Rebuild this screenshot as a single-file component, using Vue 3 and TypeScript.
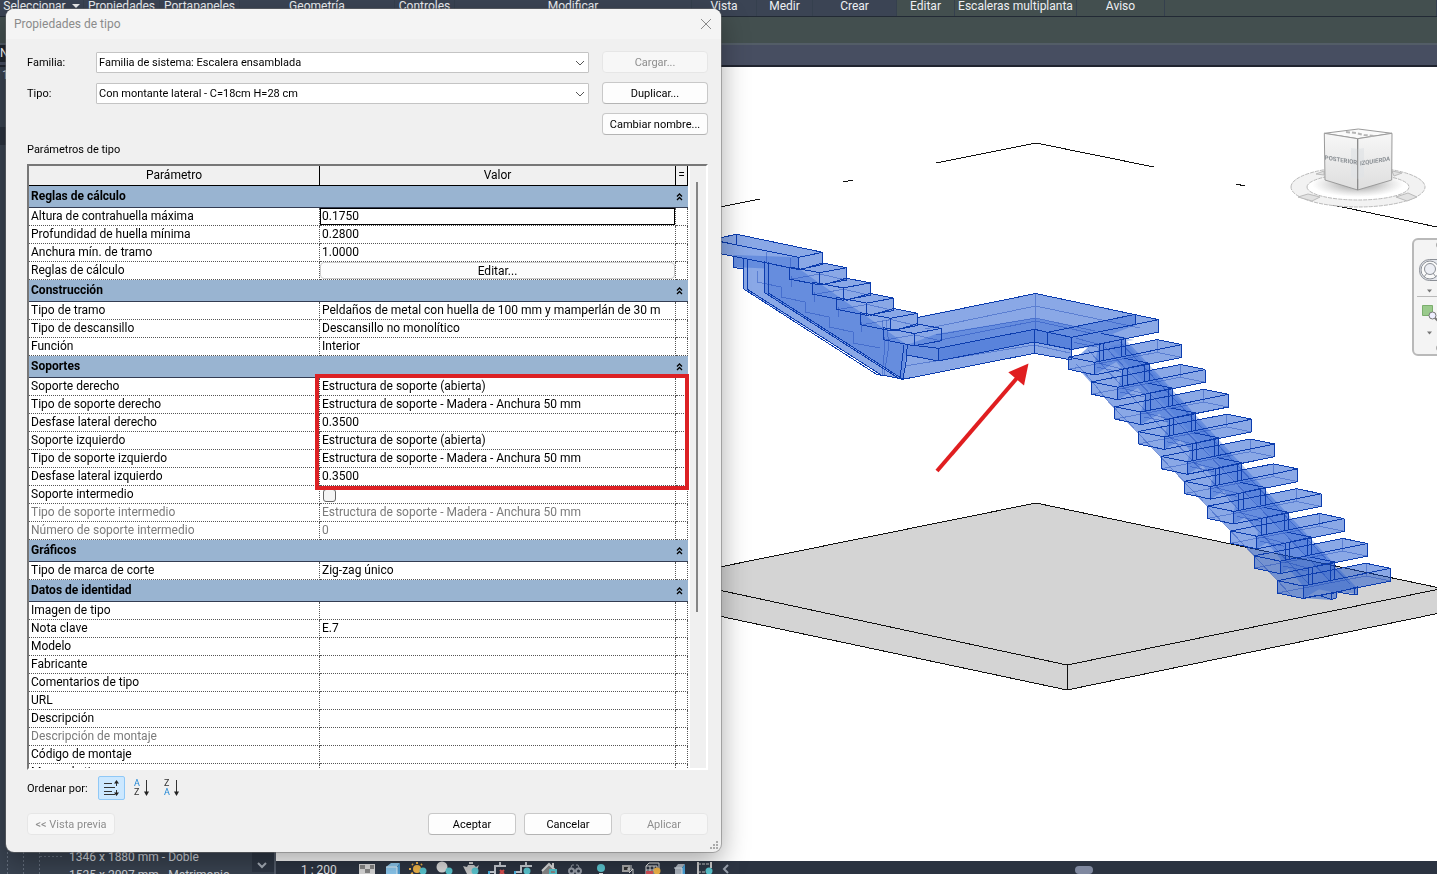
<script setup lang="ts">
import { ref } from 'vue'

interface Param { name: string; value?: string; kind?: 'input' | 'button' | 'check'; muted?: boolean }
interface Group { title: string; rows: Param[] }

const ribbon = ['Seleccionar', 'Propiedades', 'Portapapeles', 'Geometría', 'Controles', 'Modificar', 'Vista', 'Medir', 'Crear', 'Editar', 'Escaleras multiplanta', 'Aviso']

const support = 'Estructura de soporte - Madera - Anchura 50 mm'
const groups: Group[] = [
  { title: 'Reglas de cálculo', rows: [
    { name: 'Altura de contrahuella máxima', value: '0.1750', kind: 'input' },
    { name: 'Profundidad de huella mínima', value: '0.2800' },
    { name: 'Anchura mín. de tramo', value: '1.0000' },
    { name: 'Reglas de cálculo', value: 'Editar...', kind: 'button' },
  ] },
  { title: 'Construcción', rows: [
    { name: 'Tipo de tramo', value: 'Peldaños de metal con huella de 100 mm y mamperlán de 30 m' },
    { name: 'Tipo de descansillo', value: 'Descansillo no monolítico' },
    { name: 'Función', value: 'Interior' },
  ] },
  { title: 'Soportes', rows: [
    { name: 'Soporte derecho', value: 'Estructura de soporte (abierta)' },
    { name: 'Tipo de soporte derecho', value: support },
    { name: 'Desfase lateral derecho', value: '0.3500' },
    { name: 'Soporte izquierdo', value: 'Estructura de soporte (abierta)' },
    { name: 'Tipo de soporte izquierdo', value: support },
    { name: 'Desfase lateral izquierdo', value: '0.3500' },
    { name: 'Soporte intermedio', kind: 'check' },
    { name: 'Tipo de soporte intermedio', value: support, muted: true },
    { name: 'Número de soporte intermedio', value: '0', muted: true },
  ] },
  { title: 'Gráficos', rows: [{ name: 'Tipo de marca de corte', value: 'Zig-zag único' }] },
  { title: 'Datos de identidad', rows: [
    { name: 'Imagen de tipo' },
    { name: 'Nota clave', value: 'E.7' },
    { name: 'Modelo' },
    { name: 'Fabricante' },
    { name: 'Comentarios de tipo' },
    { name: 'URL' },
    { name: 'Descripción' },
    { name: 'Descripción de montaje', muted: true },
    { name: 'Código de montaje' },
    { name: 'Marca de tipo' },
  ] },
]

const riser = ref('0.1750')
const middle = ref(false)

// Lower flight: ten identical treads; upper flight: five.
const lower = Array.from({ length: 10 }, (_, i) => `translate(${(i - 9) * 23.2} ${(i - 9) * 24.85})`)
const upper = Array.from({ length: 5 }, (_, i) => `translate(${i * 23.6} ${i * 15.2})`)
</script>

<template>
  <div class="app">
    <header class="ribbon">
      <span v-for="(r, i) in ribbon" :key="r" class="tab" :class="{ green: i > 8 }">{{ r }}<i v-if="i === 0" class="caret"></i></span>
      <span class="green"></span>
    </header>
    <div class="band"></div>
    <div class="subband"></div>

    <div class="work">
      <aside class="browser">
        <div class="brow-head">N</div>
        <div class="brow-one">1</div>
        <div class="brow-dark"></div>
        <div class="tree">
          <svg class="guides" viewBox="0 0 69 30" width="69" height="30"><path d="M7.500 0V30M23.500 0V30M39.500 0V30M40 8.500H64" stroke="#66707f" stroke-dasharray="2 2" fill="none" /></svg>
          <div class="tree-text"><div>1346 x 1880 mm - Doble</div><div>1525 x 2007 mm - Matrimonio</div></div>
          <svg class="tree-arrow" viewBox="0 0 22 24" width="22" height="24"><path d="M6 15l4 4 4-4" stroke="#aab1bc" stroke-width="2" fill="none" /></svg>
        </div>
      </aside>

      <main class="view">
        <svg class="scene" viewBox="276 67 1161 794" preserveAspectRatio="xMinYMin slice" role="img" aria-label="Vista 3D de la escalera">
          <g stroke="#111" stroke-width="1" fill="none" shape-rendering="crispEdges">
            <path d="M936 163L1036 143L1154 167M843 182L853 180M1236 184L1245 186M700 211L760 199M1328 204L1437 227" />
            <path fill="#d4d4d4" d="M700 571L1036 503L1440 588V613L1067 690L700 612Z" />
            <path d="M700 586L1067 665L1440 589M1067 665V690" />
          </g>

          <!-- translucent body, first layer -->
          <g class="solid">
            <path d="M903 320L1035.700 293.500L1158.700 319.700V332L1072 349.500V360L1034.300 353L903 379L905 340Z" />
            <path d="M700 242L736.700 234.300L822.700 252.300V265L798.700 270L700 249Z" />
            <path d="M733.300 252L798 262L907 345L903 379L882 375L743.300 288.700V269L733.300 267Z" />
            <path v-for="t in upper" :key="t" :transform="t" d="M789.300 267L822.700 263.300L846.700 267.700V280L819.700 285L789.300 279Z" />
            <path d="M1072 362L1104 397L1277 580L1303 598L1331 600L1322 580L1125 355L1098 338Z" />
            <g v-for="t in lower" :key="t" :transform="t">
              <path d="M1277.300 580.700L1366 563.300L1390.700 568.300V581L1303.300 598.500L1277.300 593Z" />
              <path d="M1308.300 568L1310 557L1334.700 562.500V580L1308.300 586Z" />
            </g>
            <path d="M1300 590L1336 586L1357 587V594L1338 592L1336 598L1331 599.500L1318 596Z" />
          </g>
          <!-- second layer where members overlap -->
          <g class="deep">
            <path d="M936 334L1034.300 318L1100 331L1134 340L1072 350L1034.300 342L938 361L907 355V345Z" />
            <path d="M1047.700 332.300L1135.700 314.300V325L1072 349.500L1047.700 344Z" />
            <path d="M764.500 257L798 268L907 345L903 379L764.500 292.500Z" />
            <path d="M733.300 255L798.700 257.300V270L733.300 267Z" />
            <path d="M1098 340L1126 340L1340 570L1357 588L1332 592L1303 586Z" />
            <path v-for="t in lower" :key="t" :transform="t" d="M1303.300 586L1308.300 568L1334.700 562.500V580L1303.300 598.500Z" />
          </g>
          <g class="deeper">
            <path d="M938 348.300L1034.300 329.300L1072 337V350L1034.300 342L938 361Z" />
            <path d="M1110 346L1126 343L1336 570L1330 582Z" />
          </g>

          <g class="edges">
            <path d="M917 317.700L1035.700 293.500L1158.700 319.700V332L1071.700 349.500L1047.700 344.500V332.300L1135.700 314.300V325M1047.700 332.300L1071.700 337.300L1158.700 319.700M1071.700 337.300V360L1034.300 353.300L903 379.300L882 375" />
            <path d="M911 345L938.300 348.300L1034.300 329.300L1047.700 332.300M907 355L938.300 361L1034.300 342L1072 349.500M938.300 348.300V361M1034.300 329.300V353.300" />
            <path class="thin" d="M925 329L1035.700 306L1140 328M936 335L1035.700 318L1095 331M940 340L1035.700 321L1090 333M905 366L1034 345L1070 353M1035.700 293.500V329" />
            <path d="M700 242L736.700 234.300L822.700 252.300V264.500L798.700 269.500L700 249.500M700 237.500L798.700 257.300L822.700 252.300M798.700 257.300V269.500M736.700 234.300V245M733.300 256V267.500L743 269" />
            <path d="M743.300 258V288.700L876 374L882 375.500L747.300 289.300V259M764.500 261V292.500L899 378.500L903 379.300L768.500 293V262M907.300 345L906 362L903 379.300M904 345L900 378" />
            <path class="thin" d="M757 271V282L781 287V297L805 302V312L829 317V327L853 332V343L880 348M766 252V262M790 258V268M791 276V287M814 292V302M838 307V317M861 322V332M882 320L885 345L882 375M886 320L889 345L884 375" />
            <g v-for="t in upper" :key="t" :transform="t">
              <path d="M789.300 267L819.700 272.700L846.700 267.700V280L819.700 285L789.300 279ZM819.700 272.700V285M799 270L822.700 263L846.700 267.700" />
              <path class="thin" d="M792 279L820 274L846 280" />
            </g>
            <path class="thin" d="M1076 364C1086 374 1094 382 1104 397L1277 580L1290 594M1088 350L1308 583M1105 347L1332 583M1120 342L1350 584" />
            <g v-for="t in lower" :key="t" :transform="t">
              <path d="M1277.300 580.700L1303.300 586L1390.700 568.300L1366 563.300L1277.300 580.700V593L1303.300 598.500L1390.700 581V568.300M1303.300 586V598.500M1308.300 568V585M1312.600 567V584M1330.400 563V580M1334.700 562V579M1308.300 568L1334.700 562L1310 557" />
              <path class="thin" d="M1366 563.300V576L1277.300 593M1366 576L1390.700 581M1285 562L1308 568M1283 566L1307 571" />
            </g>
            <path d="M1303 598.500L1318 595L1331.300 599.500L1336 598V592L1318 596M1331.300 599.500V594L1336 592M1338 592L1354 595L1357.500 594V587L1338 592M1354 595V588" />
          </g>

          <path d="M937 471L1017 378" stroke="#e01e20" stroke-width="4" />
          <path d="M1028.500 363.500L1008.300 372.300L1024 385.500Z" fill="#e01e20" />

          <!-- view cube -->
          <defs>
            <radialGradient id="shade"><stop offset="0" stop-color="#666" stop-opacity=".75" /><stop offset="1" stop-color="#999" stop-opacity="0" /></radialGradient>
            <linearGradient id="face" x1="0" y1="0" x2="0" y2="1"><stop offset="0" stop-color="#f7f7f7" /><stop offset="1" stop-color="#dedede" /></linearGradient>
          </defs>
          <path fill-rule="evenodd" fill="#f2f2f2" stroke="#b9b9b9" stroke-dasharray="4 1" d="M1291 187a67 20 0 0 1 134 0a67 20 0 0 1 -134 0M1307 187a51 13 0 0 0 102 0a51 13 0 0 0 -102 0" />
          <path fill="#e2e2e2" stroke="#bbb" d="M1298 197l10-3 12 3-8 4zM1396 197l12-4 9 4-10 4zM1316 174l8-3v4zM1392 171l10 2-8 3z" />
          <ellipse cx="1358" cy="184" rx="46" ry="13" fill="url(#shade)" />
          <g stroke="#9a9a9a" stroke-width="1">
            <path fill="#fafafa" d="M1324.300 133.300L1358.300 129L1392 133.300L1357.700 138.700Z" />
            <path fill="url(#face)" d="M1324.300 133.300L1357.700 138.700V190L1325 180Z" />
            <path fill="url(#face)" d="M1392 133.300L1357.700 138.700V190L1391.700 180Z" />
          </g>
          <path fill="#dfe2e5" d="M1351 148l7 1 6-1v29l-6 2-7-2z" opacity=".7" />
          <path d="M1357.700 139V190" stroke="#888" />
          <path d="M1346 132l10 1 8 2 10 1" stroke="#b5b5b5" stroke-width="2" stroke-dasharray="4 2" fill="none" />
          <text class="cube-text" transform="translate(1341 162) skewY(9)">POSTERIOR</text>
          <text class="cube-text" transform="translate(1375 163) skewY(-9)">IZQUIERDA</text>

          <!-- navigation bar -->
          <rect x="1413" y="239" width="40" height="116" rx="5" fill="#f4f4f4" stroke="#b9b9b9" stroke-width="2" />
          <g fill="none" stroke="#8b8f96">
            <rect x="1419.500" y="259.500" width="30" height="21" rx="10" fill="#e6e8ee" />
            <circle cx="1430" cy="270" r="9" fill="#fafafa" /><circle cx="1430" cy="269" r="5.500" fill="#eceef4" />
            <path d="M1424 277l3-4M1436 277l-3-4" /><path d="M1417 296.500H1437" stroke="#b9b9b9" />
          </g>
          <path fill="#777" d="M1427 289.500h5l-2.500 3zM1427 331.500h5l-2.500 3z" />
          <path fill="#9aca8c" stroke="#7bae6d" d="M1422.500 305.500h10v10h-10z" />
          <circle cx="1432.500" cy="315.500" r="3.500" fill="#eef" stroke="#777" /><path d="M1435 318l3 3" stroke="#777" stroke-width="2" />
          <circle cx="1439" cy="245" r="3" fill="#aaa" /><circle cx="1439" cy="348" r="3" fill="#aaa" />
        </svg>

        <footer class="status">
          <span class="scale">1 : 200</span>
          <svg class="icons" viewBox="359 861 380 13" width="380" height="13">
            <path fill="#ddd" d="M359 864h16v10h-16z" /><path fill="#888" d="M360 865h5v4h-5zM370 865h4v4h-4zM365 869h5v4h-5z" />
            <path fill="#8ecbf2" d="M386 867l5-4h9l-3 4v7h-11z" /><path fill="#4e9fd6" d="M397 867l3-4v11h-3z" /><path d="M386 867h11v7" fill="none" stroke="#e2f2fc" />
            <circle cx="417" cy="869" r="4" fill="#f3b74a" /><path d="M417 862v2M411 869h-2M412 864l1 1M422 864l-1 1M411 874l2-1" stroke="#f3b74a" stroke-width="2" />
            <circle cx="442" cy="867" r="5.500" fill="#ddd" />
            <path fill="#ccc" d="M463 866l4 1 1-2h6l2 2 3-2-2 5-2 4h-8l-2-4z" /><path fill="#ccc" d="M469 862h4v2h-4z" />
            <path d="M490 872h5v-6h11M500 862v4M495 866v8M516 872h5v-6h11M526 862v4" stroke="#c9ced5" stroke-width="2" fill="none" />
            <path d="M489 874v-3M515 874v-3" stroke="#49b8e8" stroke-width="2" /><path d="M500 870l4 4m0-4l-4 4" stroke="#e05050" stroke-width="2" />
            <path d="M542 871l7-7 7 7v3h-14z" fill="#888" /><path d="M542 871l7-7 7 7M553 863v4" fill="none" stroke="#ddd" stroke-width="2" /><path d="M550 870h6v4h-6z" fill="none" stroke="#57c5cf" stroke-width="2" />
            <path d="M570 870l2-5h2M580 870l-2-5h-2M573 871h4" fill="none" stroke="#999fa9" /><circle cx="571.500" cy="871" r="2.500" fill="none" stroke="#999fa9" stroke-width="2" /><circle cx="578.500" cy="871" r="2.500" fill="none" stroke="#999fa9" stroke-width="2" />
            <circle cx="601" cy="868" r="4" fill="#5cc8d2" /><path d="M599 873h4v1h-4z" fill="#ddd" />
            <path d="M622 865h8v7h-8z" fill="#aaa" /><path d="M624 867h4v3h-4z" fill="#333" /><path d="M627 869h6M629 873l4-4v5M631 865v3" fill="none" stroke="#ddd" />
            <path d="M646 866h11v8M646 866v8M646 866l3-3h10v8M650 866v8M654 866v8M646 870h11" fill="none" stroke="#ddd" /><path fill="#d65058" d="M646 871h7v3h-7z" />
            <path fill="#aeb6c0" d="M675 868l3-4h7l-3 4v6h-7z" /><path fill="#49a5dd" d="M682 868l3-4v10h-3z" /><path d="M674 868h8v6" fill="none" stroke="#dde6ee" />
            <path d="M698 862v12M711 862v6" fill="none" stroke="#ccc" stroke-width="2" /><path d="M698 864h13M698 872h8" fill="none" stroke="#ccc" stroke-dasharray="3 1" />
            <g fill="#5cc8d2"><circle cx="423" cy="871" r="3.500" /><circle cx="449" cy="871" r="3.500" /><circle cx="475" cy="871" r="3.500" /><circle cx="527" cy="871" r="3.500" /><circle cx="709" cy="871" r="3.500" /></g>
            <circle cx="657" cy="871" r="3.500" fill="#f3b74a" />
            <path d="M728 865l-4 4 4 4" fill="none" stroke="#9ba3af" stroke-width="2" />
          </svg>
          <span class="track"><i class="hthumb"></i></span>
        </footer>
      </main>
    </div>

    <section class="dialog" role="dialog" aria-labelledby="dlg-title">
      <div class="titlebar">
        <span id="dlg-title">Propiedades de tipo</span>
        <button class="close" aria-label="Cerrar"><svg viewBox="0 0 12 12" width="12" height="12"><path d="M1 1l10 10M11 1L1 11" stroke="#8a8a8a" fill="none" /></svg></button>
      </div>
      <div class="body">
        <div class="form">
          <label for="fam">Familia:</label>
          <div class="combo"><select id="fam"><option>Familia de sistema: Escalera ensamblada</option></select><svg viewBox="0 0 10 6" width="10" height="6"><path d="M1 1l4 4 4-4" stroke="#555" fill="none" /></svg></div>
          <button class="btn" disabled>Cargar...</button>
          <label for="typ">Tipo:</label>
          <div class="combo"><select id="typ"><option>Con montante lateral - C=18cm H=28 cm</option></select><svg viewBox="0 0 10 6" width="10" height="6"><path d="M1 1l4 4 4-4" stroke="#555" fill="none" /></svg></div>
          <button class="btn">Duplicar...</button>
          <button class="btn third">Cambiar nombre...</button>
        </div>
        <div class="caption">Parámetros de tipo</div>

        <div class="grid-wrap">
          <div class="grid-clip">
            <table>
              <colgroup><col class="c1" /><col /><col class="c3" /></colgroup>
              <thead><tr><th>Parámetro</th><th>Valor</th><th>=</th></tr></thead>
              <tbody v-for="g in groups" :key="g.title">
                <tr class="cat"><th colspan="2" scope="rowgroup">{{ g.title }}</th><th class="fold"><svg viewBox="0 0 7 8" width="7" height="8"><path d="M1 3.500L3.500 1 6 3.500M1 7L3.500 4.500 6 7" stroke="#000" stroke-width="1.300" fill="none" /></svg></th></tr>
                <tr v-for="p in g.rows" :key="p.name" :class="{ muted: p.muted }">
                  <td>{{ p.name }}</td>
                  <td v-if="p.kind === 'input'" class="ctl"><input v-model="riser" class="edit" type="text" :aria-label="p.name" /></td>
                  <td v-else-if="p.kind === 'button'" class="ctl"><button class="cellbtn">{{ p.value }}</button></td>
                  <td v-else-if="p.kind === 'check'" class="ctl"><input v-model="middle" class="check" type="checkbox" :aria-label="p.name" /></td>
                  <td v-else>{{ p.value }}</td>
                  <td></td>
                </tr>
              </tbody>
            </table>
          </div>
          <div class="scroll"><i class="thumb"></i></div>
          <div class="mark"></div>
        </div>

        <div class="sort">
          <span>Ordenar por:</span>
          <button class="tool on" aria-label="Orden predeterminado"><svg viewBox="0 0 18 18" width="18" height="18"><path d="M1 4.500h8M1 8.500h11M1 12.500h8M1 15.500h11M13.500 3v4M13.500 11v4" stroke="#333" fill="none" /><path fill="#222" d="M11 4.500L13.500 1 16 4.500zM11 13.500L13.500 17 16 13.500z" /></svg></button>
          <button class="tool" aria-label="Orden ascendente"><svg viewBox="0 0 18 18" width="18" height="18"><text x="1" y="7" class="az blue">A</text><text x="1" y="16" class="az">Z</text><path d="M13.500 1v13" stroke="#333" /><path fill="#222" d="M11 12.500h5L13.500 17z" /></svg></button>
          <button class="tool" aria-label="Orden descendente"><svg viewBox="0 0 18 18" width="18" height="18"><text x="1" y="7" class="az">Z</text><text x="1" y="16" class="az blue">A</text><path d="M13.500 1v13" stroke="#333" /><path fill="#222" d="M11 12.500h5L13.500 17z" /></svg></button>
        </div>
        <div class="actions">
          <button class="btn prev" disabled>&lt;&lt; Vista previa</button>
          <button class="btn">Aceptar</button>
          <button class="btn">Cancelar</button>
          <button class="btn" disabled>Aplicar</button>
        </div>
      </div>
      <svg class="grip" viewBox="0 0 9 9" width="9" height="9"><path fill="#aaa" d="M6 0h2v2h-2zM6 3h2v2h-2zM3 3h2v2h-2zM6 6h2v2h-2zM3 6h2v2h-2zM0 6h2v2h-2z" /></svg>
    </section>
  </div>
</template>

<style>
body { overflow: hidden; }
</style>

<style scoped>
* { box-sizing: border-box; }
.app { position: relative; height: 100vh; display: flex; flex-direction: column; overflow: hidden; font-family: Roboto, "Open Sans", sans-serif; font-size: 12px; color: #111; background: #3a4350; }
button, input, select { font: inherit; color: inherit; margin: 0; }

.ribbon { display: grid; grid-template-columns: 84px 76px 80px 155px 60px 237px 65px 56px 84px 58px 122px 88px 1fr; height: 17px; flex: none; background: #3b4454; border-bottom: 1px solid #222a35; color: #eef0f3; }
.ribbon > span { border-right: 1px solid #35404e; height: 16px; }
.tab { display: flex; justify-content: center; align-items: flex-start; line-height: 13px; white-space: nowrap; }
.green { background: #434f4f; }
.caret { margin: 4px 0 0 6px; border: 4px solid transparent; border-top-color: #eee; border-bottom: 0; }
.band { height: 28px; flex: none; background: #434f4f; border-bottom: 2px solid #535d67; }
.subband { height: 22px; flex: none; background: #474e61; border-bottom: 2px solid #20242f; }

.work { flex: 1; display: flex; min-height: 0; }
.browser { width: 276px; flex: none; display: flex; flex-direction: column; background: #3a4452; color: #d5d9df; border-right: 2px solid #555e6c; }
.brow-head { margin-top: -22px; height: 17px; background: #20262f; color: #fff; line-height: 17px; }
.brow-one { height: 65px; padding: 6px 0 0 2px; }
.brow-dark { height: 18px; background: #2b3340; }
.tree { margin-top: auto; height: 26px; display: flex; overflow: hidden; }
.guides { flex: none; }
.tree-text { flex: 1; line-height: 18px; white-space: nowrap; }
.tree-arrow { flex: none; background: #2e3745; }

.view { flex: 1; min-width: 0; display: flex; flex-direction: column; background: #fff; }
.scene { flex: 1; min-height: 0; width: 100%; display: block; }
.solid { fill: #1450cd; opacity: .5; }
.deep { fill: #1450cd; opacity: .3; }
.deeper { fill: #1450cd; opacity: .15; }
.edges { shape-rendering: crispEdges; }
.edges path { fill: none; stroke: #0b3cae; stroke-width: 1; }
.edges .thin { stroke: rgba(20, 65, 180, .4); }
.cube-text { font: 700 6px Roboto, sans-serif; fill: #8a8f94; text-anchor: middle; }
.status { height: 13px; flex: none; display: flex; overflow: hidden; background: #2d3543; color: #eceef0; }
.scale { width: 83px; padding-left: 25px; line-height: 18px; }
.icons { flex: none; }
.track { flex: 1; display: flex; justify-content: center; align-items: flex-start; padding-right: 8px; background: #2b3341; }
.hthumb { width: 18px; height: 8px; margin-top: 5px; border-radius: 4px; background: #8089a0; }

.dialog { position: absolute; left: 6px; top: 9px; bottom: 22px; width: 715px; display: flex; flex-direction: column; background: #f0f0f0; border-radius: 8px; box-shadow: 0 0 0 1px rgba(110, 110, 110, .5), 0 10px 28px rgba(0, 0, 0, .35); overflow: hidden; }
.titlebar { height: 30px; flex: none; display: flex; justify-content: space-between; align-items: center; padding: 0 9px 0 8px; background: #f4f4f4; color: #8b8b8b; }
.close { border: 0; padding: 0; background: none; display: flex; }
.body { flex: 1; min-height: 0; display: flex; flex-direction: column; padding: 12px 13px 17px 21px; font-size: 11px; color: #000; }
.form { display: grid; grid-template-columns: 69px 1fr 106px; grid-auto-rows: 22px; row-gap: 9px; align-items: center; }
.combo { position: relative; margin-right: 13px; height: 21px; }
.combo select { appearance: none; width: 100%; height: 21px; padding: 0 20px 0 2px; border: 1px solid #c4c4c4; border-radius: 1px; background: #fff; color: #000; display: block; }
.combo svg { position: absolute; right: 4px; top: 8px; pointer-events: none; }
.btn { height: 22px; padding: 0; border: 1px solid #c8c8c8; border-bottom-color: #b4b4b4; border-radius: 4px; background: #fdfdfd; color: #000; text-align: center; white-space: nowrap; }
.btn:disabled { color: #8e8e8e; background: #f7f7f7; border-color: #e6e6e6; }
.third { grid-column: 3; }
.caption { margin: 7px 0 6px; line-height: 16px; flex: none; }

.grid-wrap { position: relative; flex: 1; min-height: 0; display: flex; border: 2px solid #fff; border-top: 2px solid #777; border-left: 2px solid #777; background: #fff; }
.grid-clip { flex: 1; min-width: 0; overflow: hidden; font-size: 12px; }
table { width: 100%; table-layout: fixed; border-collapse: separate; border-spacing: 0; }
.c1 { width: 291px; }
.c3 { width: 12px; }
th, td { padding: 0 2px; overflow: hidden; white-space: nowrap; }
thead th { height: 20px; background: #f0f0f0; font-weight: 400; text-align: center; line-height: 19px; border-right: 1px solid #000; border-bottom: 1px solid #000; }
thead th:last-child { padding: 0; }
.cat th { height: 22px; line-height: 21px; background: #99b4d1; text-align: left; font-weight: 700; border-bottom: 1px solid #333c52; color: #000; }
.cat .fold { padding: 0; text-align: left; line-height: 8px; vertical-align: middle; }
td { height: 18px; line-height: 17px; border-right: 1px dotted #555; border-bottom: 1px dotted #555; }
.muted td { color: #7b7b7b; }
.ctl { padding: 0; }
.edit { display: block; width: 100%; height: 17px; padding: 0 1px; border: 1px solid #000; border-radius: 0; outline: 0; background: #fff; }
.cellbtn { display: block; width: 100%; height: 17px; padding: 0; line-height: 14px; border: 1px solid #ccc; border-radius: 4px; background: #fcfcfc; }
.check { appearance: none; display: block; width: 13px; height: 13px; margin: 2px 0 0 3px; border: 1px solid #666; border-radius: 3px; background: #f5f5f5; }
.scroll { width: 16px; flex: none; margin-left: 2px; background: #f0f0f0; }
.thumb { display: block; width: 2px; height: 430px; margin: 16px 0 0 6px; background: #858585; }
.mark { position: absolute; left: 286px; top: 208px; width: 374px; height: 116px; border: 4px solid #dc2124; pointer-events: none; }

.sort { display: flex; align-items: center; margin-top: 6px; height: 24px; flex: none; gap: 3px; }
.sort span { width: 68px; white-space: nowrap; }
.tool { width: 27px; height: 24px; padding: 0; border: 1px solid transparent; border-radius: 2px; background: none; display: flex; align-items: center; justify-content: center; }
.on { background: #cce8ff; border-color: #90c8f6; }
.az { font: 9px Roboto, sans-serif; fill: #333; }
.az.blue { fill: #1c84d4; }
.actions { display: flex; justify-content: flex-end; gap: 8px; margin-top: 13px; flex: none; }
.actions .btn { width: 88px; }
.actions .prev { margin-right: auto; }
.grip { position: absolute; right: 2px; bottom: 2px; }
</style>
